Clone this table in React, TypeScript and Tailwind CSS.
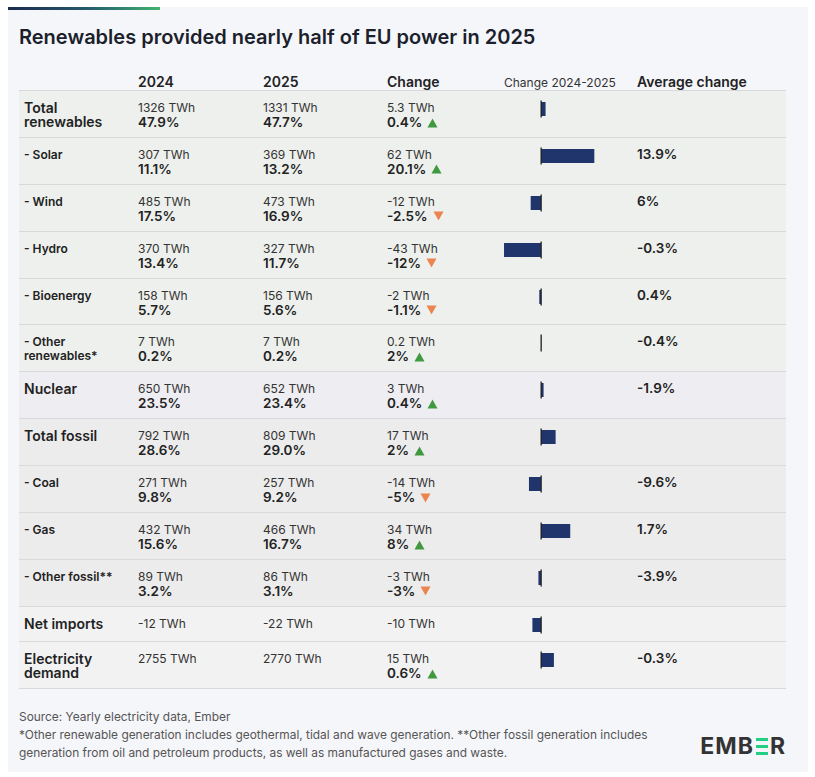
type Row = {
  label: string[];
  main?: boolean;
  y24: string;
  p24?: string;
  y25: string;
  p25?: string;
  ch: string;
  pch?: string;
  up?: boolean;
  val: number;
  avg?: string;
  bg: string;
  short?: boolean;
};

const rows: Row[] = [
  { label: ["Total", "renewables"], main: true, y24: "1326 TWh", p24: "47.9%", y25: "1331 TWh", p25: "47.7%", ch: "5.3 TWh", pch: "0.4%", up: true, val: 5.3, bg: "bg-[#edf0ec]" },
  { label: ["- Solar"], y24: "307 TWh", p24: "11.1%", y25: "369 TWh", p25: "13.2%", ch: "62 TWh", pch: "20.1%", up: true, val: 62, avg: "13.9%", bg: "bg-[#edf0ec]" },
  { label: ["- Wind"], y24: "485 TWh", p24: "17.5%", y25: "473 TWh", p25: "16.9%", ch: "-12 TWh", pch: "-2.5%", val: -12, avg: "6%", bg: "bg-[#edf0ec]" },
  { label: ["- Hydro"], y24: "370 TWh", p24: "13.4%", y25: "327 TWh", p25: "11.7%", ch: "-43 TWh", pch: "-12%", val: -43, avg: "-0.3%", bg: "bg-[#edf0ec]" },
  { label: ["- Bioenergy"], y24: "158 TWh", p24: "5.7%", y25: "156 TWh", p25: "5.6%", ch: "-2 TWh", pch: "-1.1%", val: -2, avg: "0.4%", bg: "bg-[#edf0ec]" },
  { label: ["- Other", "renewables*"], y24: "7 TWh", p24: "0.2%", y25: "7 TWh", p25: "0.2%", ch: "0.2 TWh", pch: "2%", up: true, val: 0.2, avg: "-0.4%", bg: "bg-[#edf0ec]" },
  { label: ["Nuclear"], main: true, y24: "650 TWh", p24: "23.5%", y25: "652 TWh", p25: "23.4%", ch: "3 TWh", pch: "0.4%", up: true, val: 3, avg: "-1.9%", bg: "bg-[#eeedf1]" },
  { label: ["Total fossil"], main: true, y24: "792 TWh", p24: "28.6%", y25: "809 TWh", p25: "29.0%", ch: "17 TWh", pch: "2%", up: true, val: 17, bg: "bg-[#ececec]" },
  { label: ["- Coal"], y24: "271 TWh", p24: "9.8%", y25: "257 TWh", p25: "9.2%", ch: "-14 TWh", pch: "-5%", val: -14, avg: "-9.6%", bg: "bg-[#ececec]" },
  { label: ["- Gas"], y24: "432 TWh", p24: "15.6%", y25: "466 TWh", p25: "16.7%", ch: "34 TWh", pch: "8%", up: true, val: 34, avg: "1.7%", bg: "bg-[#ececec]" },
  { label: ["- Other fossil**"], y24: "89 TWh", p24: "3.2%", y25: "86 TWh", p25: "3.1%", ch: "-3 TWh", pch: "-3%", val: -3, avg: "-3.9%", bg: "bg-[#ececec]" },
  { label: ["Net imports"], main: true, y24: "-12 TWh", y25: "-22 TWh", ch: "-10 TWh", val: -10, bg: "bg-[#f2f2f2]", short: true },
  { label: ["Electricity", "demand"], main: true, y24: "2755 TWh", y25: "2770 TWh", ch: "15 TWh", pch: "0.6%", up: true, val: 15, avg: "-0.3%", bg: "bg-[#f2f2f2]" },
];

const SCALE = 0.86;
const AXIS = 71;

function Triangle({ up }: { up?: boolean }) {
  return up ? (
    <svg width="11" height="10" viewBox="0 0 11 10" className="ml-[5px] inline-block">
      <polygon points="5.5,0.5 10.5,9.5 0.5,9.5" fill="#3f9a3f" />
    </svg>
  ) : (
    <svg width="11" height="10" viewBox="0 0 11 10" className="ml-[5px] inline-block">
      <polygon points="0.5,0.5 10.5,0.5 5.5,9.5" fill="#ec8450" />
    </svg>
  );
}

function Bar({ val }: { val: number }) {
  const w = Math.abs(val) * SCALE;
  const x = val >= 0 ? AXIS : AXIS - w;
  return (
    <svg width="167" height="30" className="block">
      <rect x={x} y="11" width={w} height="14" fill="#21356d" />
      <rect x={AXIS - 0.5} y="9.5" width="1.3" height="17" fill="#222" />
    </svg>
  );
}

function Value({ twh, pct }: { twh: string; pct?: string }) {
  return (
    <div className="pt-[10px]">
      <div className="text-[12px] leading-[14px] text-[#333]">{twh}</div>
      {pct && <div className="mt-[1px] text-[13.5px] font-semibold leading-[13px] text-[#222]">{pct}</div>}
    </div>
  );
}

export default function App() {
  return (
    <div className="min-h-screen bg-white px-[8px] pt-[7px] font-['Inter',sans-serif]">
      <div className="h-[765px] w-[800px] bg-[#f5f6fa] pl-[11px] pr-[22px]">
        <div className="-ml-[11px] h-[3px] w-[152px] bg-linear-to-r from-[#1c2a4f] via-[#24566a] to-[#43b46e]" />
        <h1 className="mt-[13px] text-[20px] font-semibold leading-[28px] text-[#1c1f2c]">
          Renewables provided nearly half of EU power in 2025
        </h1>

        <div className="mt-[23px] grid h-[17px] grid-cols-[119px_125px_124px_83px_167px_1fr] border-b border-[#d9d9d9] text-[14px] font-semibold leading-[16px] text-[#222]">
          <div />
          <div>2024</div>
          <div>2025</div>
          <div>Change</div>
          <div className="pl-[34px] pt-[1px] text-[12px] font-normal text-[#333]">Change 2024-2025</div>
          <div>Average change</div>
        </div>

        {rows.map((r) => (
          <div
            key={r.label.join(" ")}
            className={`grid grid-cols-[119px_125px_124px_83px_167px_1fr] border-b border-[#d9d9d9] ${r.bg} ${r.short ? "h-[35.7px]" : "h-[46.9px]"}`}
          >
            <div className="pl-[5px] pt-[10px]">
              {r.label.map((l) => (
                <div
                  key={l}
                  className={r.main ? "text-[14px] font-semibold leading-[14px] text-[#222]" : "text-[12px] font-semibold leading-[14px] text-[#222]"}
                >
                  {l}
                </div>
              ))}
            </div>
            <Value twh={r.y24} pct={r.p24} />
            <Value twh={r.y25} pct={r.p25} />
            <div className="pt-[10px]">
              <div className="text-[12px] leading-[14px] text-[#333]">{r.ch}</div>
              {r.pch && (
                <div className="mt-[1px] flex items-center text-[13.5px] font-semibold leading-[13px] text-[#222]">
                  {r.pch}
                  <Triangle up={r.up} />
                </div>
              )}
            </div>
            <div>
              <Bar val={r.val} />
            </div>
            <div className="pt-[9px] text-[13.5px] font-semibold leading-[14px] text-[#222]">{r.avg}</div>
          </div>
        ))}

        <div className="mt-[19px] flex items-end justify-between">
          <div className="text-[11.9px] leading-[18px] text-[#555]">
            Source: Yearly electricity data, Ember
            <br />
            *Other renewable generation includes geothermal, tidal and wave generation. **Other fossil generation includes
            <br />
            generation from oil and petroleum products, as well as manufactured gases and waste.
          </div>
          <div className="mb-[4px] flex items-center text-[23px] font-bold leading-[24px] tracking-[1px] text-[#333]">
            EMB
            <span className="mx-[2px] flex h-[17px] w-[12px] flex-col justify-between">
              <span className="h-[3px] w-full bg-[#22cf83]" />
              <span className="h-[3px] w-full bg-[#22cf83]" />
              <span className="h-[3px] w-full bg-[#22cf83]" />
            </span>
            R
          </div>
        </div>
      </div>
    </div>
  );
}
